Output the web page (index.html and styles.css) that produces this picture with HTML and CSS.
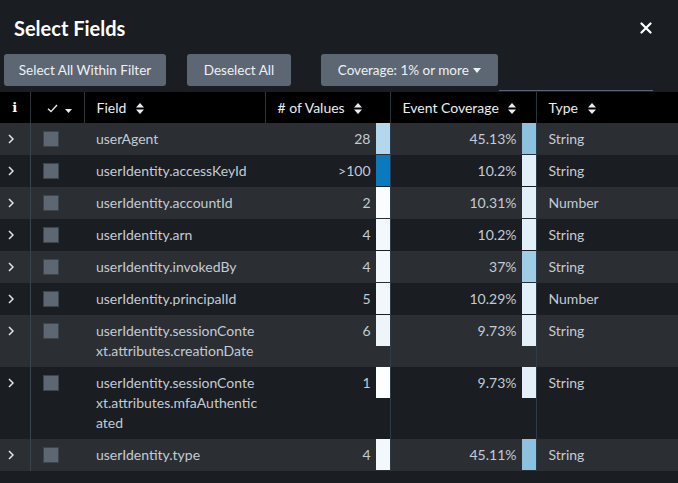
FILE: index.html
```html
<!DOCTYPE html>
<html>
<head>
<meta charset="utf-8">
<link rel="stylesheet" href="styles.css">
</head>
<body>
<div class="modal">
  <div class="header">
    <h1 class="title">Select Fields</h1>
    <svg class="close" width="12" height="12" viewBox="0 0 12 12"><path d="M1.5 1.5 L10.5 10.5 M10.5 1.5 L1.5 10.5" stroke="#fff" stroke-width="2.2" stroke-linecap="round"/></svg>
  </div>
  <div class="toolbar">
    <button class="btn">Select All Within Filter</button>
    <button class="btn btn-deselect">Deselect All</button>
    <button class="btn btn-coverage">Coverage: 1% or more <svg class="caret" width="8" height="5" viewBox="0 0 8 5"><path d="M0 0 H8 L4 5 Z" fill="#eef1f4"/></svg></button>
    <span class="underline"></span>
  </div>
  <table class="grid">
    <colgroup>
      <col class="c-info"><col class="c-check"><col class="c-field"><col class="c-values"><col class="c-cov"><col class="c-type">
    </colgroup>
    <thead>
      <tr>
        <th class="h-info">i</th>
        <th class="h-check"><svg width="11" height="9" viewBox="0 0 11 9"><path d="M1 4.8 L4 7.6 L10 1" fill="none" stroke="#e9edf1" stroke-width="1.4"/></svg><svg class="mini-caret" width="7" height="4" viewBox="0 0 7 4"><path d="M0 0 H7 L3.5 4 Z" fill="#e9edf1"/></svg></th>
        <th>Field <svg class="sort" width="8" height="11" viewBox="0 0 8 11"><path d="M0 4.5 L4 0 L8 4.5 Z M0 6.5 L4 11 L8 6.5 Z" fill="#e9edf1"/></svg></th>
        <th>&#35; of Values <svg class="sort" width="8" height="11" viewBox="0 0 8 11"><path d="M0 4.5 L4 0 L8 4.5 Z M0 6.5 L4 11 L8 6.5 Z" fill="#e9edf1"/></svg></th>
        <th>Event Coverage <svg class="sort" width="8" height="11" viewBox="0 0 8 11"><path d="M0 4.5 L4 0 L8 4.5 Z M0 6.5 L4 11 L8 6.5 Z" fill="#e9edf1"/></svg></th>
        <th>Type <svg class="sort" width="8" height="11" viewBox="0 0 8 11"><path d="M0 4.5 L4 0 L8 4.5 Z M0 6.5 L4 11 L8 6.5 Z" fill="#e9edf1"/></svg></th>
      </tr>
    </thead>
    <tbody>
      <tr>
        <td class="exp"><svg class="chev" width="6" height="10" viewBox="0 0 6 10"><path d="M1 1 L5 5 L1 9" fill="none" stroke="#e3e7eb" stroke-width="1.5"/></svg></td><td class="chk"><span class="box"></span></td>
        <td class="field">userAgent</td>
        <td class="num"><div class="cell"><span>28</span><i class="bar" style="background:#b3d8ee"></i></div></td>
        <td class="num"><div class="cell"><span>45.13%</span><i class="bar" style="background:#8cc2e0"></i></div></td>
        <td class="type">String</td>
      </tr>
      <tr>
        <td class="exp"><svg class="chev" width="6" height="10" viewBox="0 0 6 10"><path d="M1 1 L5 5 L1 9" fill="none" stroke="#e3e7eb" stroke-width="1.5"/></svg></td><td class="chk"><span class="box"></span></td>
        <td class="field">userIdentity.accessKeyId</td>
        <td class="num"><div class="cell"><span>&gt;100</span><i class="bar" style="background:#0b79bd"></i></div></td>
        <td class="num"><div class="cell"><span>10.2%</span><i class="bar" style="background:#e2f0f9"></i></div></td>
        <td class="type">String</td>
      </tr>
      <tr>
        <td class="exp"><svg class="chev" width="6" height="10" viewBox="0 0 6 10"><path d="M1 1 L5 5 L1 9" fill="none" stroke="#e3e7eb" stroke-width="1.5"/></svg></td><td class="chk"><span class="box"></span></td>
        <td class="field">userIdentity.accountId</td>
        <td class="num"><div class="cell"><span>2</span><i class="bar" style="background:#fafcfe"></i></div></td>
        <td class="num"><div class="cell"><span>10.31%</span><i class="bar" style="background:#e2f0f9"></i></div></td>
        <td class="type">Number</td>
      </tr>
      <tr>
        <td class="exp"><svg class="chev" width="6" height="10" viewBox="0 0 6 10"><path d="M1 1 L5 5 L1 9" fill="none" stroke="#e3e7eb" stroke-width="1.5"/></svg></td><td class="chk"><span class="box"></span></td>
        <td class="field">userIdentity.arn</td>
        <td class="num"><div class="cell"><span>4</span><i class="bar" style="background:#f3f8fc"></i></div></td>
        <td class="num"><div class="cell"><span>10.2%</span><i class="bar" style="background:#e2f0f9"></i></div></td>
        <td class="type">String</td>
      </tr>
      <tr>
        <td class="exp"><svg class="chev" width="6" height="10" viewBox="0 0 6 10"><path d="M1 1 L5 5 L1 9" fill="none" stroke="#e3e7eb" stroke-width="1.5"/></svg></td><td class="chk"><span class="box"></span></td>
        <td class="field">userIdentity.invokedBy</td>
        <td class="num"><div class="cell"><span>4</span><i class="bar" style="background:#f3f8fc"></i></div></td>
        <td class="num"><div class="cell"><span>37%</span><i class="bar" style="background:#a0cde6"></i></div></td>
        <td class="type">String</td>
      </tr>
      <tr>
        <td class="exp"><svg class="chev" width="6" height="10" viewBox="0 0 6 10"><path d="M1 1 L5 5 L1 9" fill="none" stroke="#e3e7eb" stroke-width="1.5"/></svg></td><td class="chk"><span class="box"></span></td>
        <td class="field">userIdentity.principalId</td>
        <td class="num"><div class="cell"><span>5</span><i class="bar" style="background:#f1f7fb"></i></div></td>
        <td class="num"><div class="cell"><span>10.29%</span><i class="bar" style="background:#e2f0f9"></i></div></td>
        <td class="type">Number</td>
      </tr>
      <tr>
        <td class="exp"><svg class="chev" width="6" height="10" viewBox="0 0 6 10"><path d="M1 1 L5 5 L1 9" fill="none" stroke="#e3e7eb" stroke-width="1.5"/></svg></td><td class="chk"><span class="box"></span></td>
        <td class="field">userIdentity.sessionConte<br>xt.attributes.creationDate</td>
        <td class="num"><div class="cell"><span>6</span><i class="bar" style="background:#edf5fa"></i></div></td>
        <td class="num"><div class="cell"><span>9.73%</span><i class="bar" style="background:#e3f0f9"></i></div></td>
        <td class="type">String</td>
      </tr>
      <tr>
        <td class="exp"><svg class="chev" width="6" height="10" viewBox="0 0 6 10"><path d="M1 1 L5 5 L1 9" fill="none" stroke="#e3e7eb" stroke-width="1.5"/></svg></td><td class="chk"><span class="box"></span></td>
        <td class="field">userIdentity.sessionConte<br>xt.attributes.mfaAuthentic<br>ated</td>
        <td class="num"><div class="cell"><span>1</span><i class="bar" style="background:#fdfeff"></i></div></td>
        <td class="num"><div class="cell"><span>9.73%</span><i class="bar" style="background:#e3f0f9"></i></div></td>
        <td class="type">String</td>
      </tr>
      <tr>
        <td class="exp"><svg class="chev" width="6" height="10" viewBox="0 0 6 10"><path d="M1 1 L5 5 L1 9" fill="none" stroke="#e3e7eb" stroke-width="1.5"/></svg></td><td class="chk"><span class="box"></span></td>
        <td class="field">userIdentity.type</td>
        <td class="num"><div class="cell"><span>4</span><i class="bar" style="background:#f3f8fc"></i></div></td>
        <td class="num"><div class="cell"><span>45.11%</span><i class="bar" style="background:#8cc2e0"></i></div></td>
        <td class="type">String</td>
      </tr>
    </tbody>
  </table>
</div>
</body>
</html>
```
FILE: styles.css
```css
html, body {
  margin: 0;
  padding: 0;
  background: #1a1d21;
  font-family: Lato, "Open Sans", sans-serif;
  color: #c3cbd4;
  overflow: hidden;
}
.modal {
  width: 678px;
  height: 483px;
}
.header {
  display: flex;
  align-items: center;
  justify-content: space-between;
  height: 54px;
  padding: 2px 26px 0 14px;
  box-sizing: border-box;
}
.title {
  margin: 0;
  font-size: 20px;
  font-weight: 700;
  color: #ffffff;
}
.close { display: block; }
.toolbar {
  position: relative;
  display: flex;
  height: 38px;
  padding-left: 4px;
  box-sizing: border-box;
}
.btn {
  height: 32px;
  border: none;
  border-radius: 3px;
  background: #5c6773;
  color: #eef1f4;
  font-family: Lato, "Open Sans", sans-serif;
  font-size: 13.5px;
  padding: 0;
}
.btn:first-child { width: 162px; }
.btn-deselect { width: 104px; margin-left: 21px; }
.btn-coverage { width: 177px; margin-left: 30px; }
.caret { margin-left: 1px; vertical-align: 2px; }
.underline {
  position: absolute;
  left: 499px;
  top: 36px;
  width: 154px;
  height: 1px;
  background: #5c6773;
}
.grid {
  width: 678px;
  border-collapse: collapse;
  table-layout: fixed;
  font-size: 14px;
}
.c-info { width: 30px; }
.c-check { width: 54px; }
.c-field { width: 181px; }
.c-values { width: 125px; }
.c-cov { width: 146px; }
.c-type { width: 142px; }
thead tr {
  background: #000000;
  height: 31px;
}
th {
  text-align: left;
  font-weight: 400;
  color: #e9edf1;
  padding: 0 0 0 12px;
  border-left: 1px solid #2f3438;
  white-space: nowrap;
}
th:first-child { border-left: none; }
.h-info {
  padding: 0;
  text-align: center;
  font-family: "DejaVu Serif", serif;
  font-weight: 700;
  font-size: 13px;
  color: #ffffff;
}
.h-check { padding-left: 16px; }
.mini-caret { margin-left: 7px; vertical-align: 0; }
.sort { margin-left: 6px; vertical-align: -1px; }
tbody tr { background: #1a1d21; }
tbody tr:nth-child(odd) { background: #2b2f33; }
td {
  vertical-align: top;
  padding: 6px 0;
  line-height: 20px;
}
.exp {
  padding: 11px 0 0 8px;
  border-right: 1px solid #3a424b;
}
.chev { display: block; }
.chk { padding-left: 12px; }
.box {
  display: block;
  width: 14px;
  height: 14px;
  margin-top: 2px;
  background: #5c6773;
  border: 1px solid #3d444c;
}
.field { padding-left: 12px; }
.num { padding: 0; }
.cell {
  display: flex;
  justify-content: flex-end;
  align-items: flex-start;
  gap: 5px;
  height: 31px;
  line-height: 32px;
}
.bar {
  display: block;
  width: 14px;
  height: 31px;
}
td.num:nth-child(4) { border-right: 1px solid #2f3b46; }
td.num:nth-child(5) { border-right: 1px solid #2f3b46; }
.type { padding-left: 12px; }
```
